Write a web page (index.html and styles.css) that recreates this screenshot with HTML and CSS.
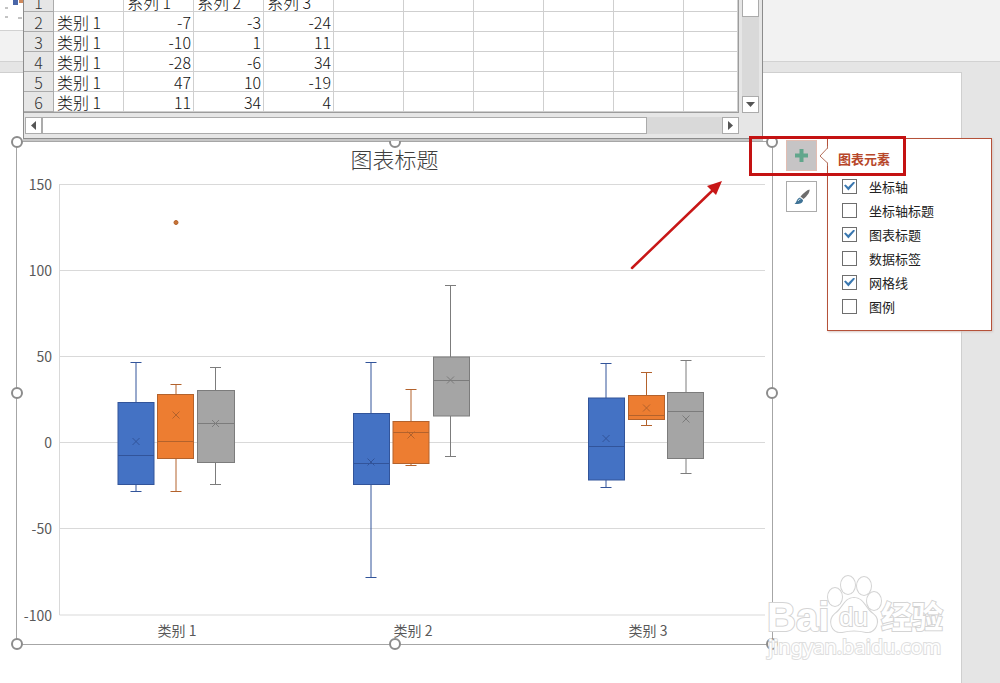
FILE: index.html
```html
<!DOCTYPE html>
<html lang="zh-CN">
<head>
<meta charset="utf-8">
<meta name="viewport" content="width=device-width, initial-scale=1">
<title>图表标题</title>
<link rel="stylesheet" href="styles.css">
</head>
<body>
<header class="ribbon">
  <div class="gallery">
    <svg width="24" height="30" viewBox="0 0 24 30" aria-hidden="true">
      <path d="M13 0h5v5h-5z" fill="#4a66a8"/><path d="M19 0h5v3h-5z" fill="#d08a5c"/>
      <path d="M5 8h3M5 17h3M18 18h4" stroke="#888"/>
    </svg>
  </div>
</header>

<main class="workspace">
  <section class="slide">
    <figure class="chart">
      <figcaption class="chart-title">图表标题</figcaption>
      <svg class="plot" viewBox="17 175 755 469" role="img" aria-label="箱形图">
        <g class="grid">
          <path d="M60 184.500H765M60 270.500H765M60 356.500H765M60 442.500H765M60 528.500H765M59.500 184V615H765"/>
        </g>
        <g class="axis-y">
          <text x="52" y="190">150</text><text x="52" y="276">100</text><text x="52" y="362">50</text>
          <text x="52" y="448">0</text><text x="52" y="534">-50</text><text x="52" y="621">-100</text>
        </g>
        <g class="axis-x">
          <text x="177" y="636">类别 1</text><text x="413" y="636">类别 2</text><text x="648" y="636">类别 3</text>
        </g>
        <g class="blue">
          <path d="M136 362V402M136 485V491M130.500 362.500h11M130.500 491.500h11"/>
          <rect x="118" y="402.500" width="36" height="82"/><path d="M118 455.500h36M132.500 438l7 7m0-7l-7 7"/>
          <path d="M371 362V414M371 485V577M365.500 362.500h11M365.500 577.500h11"/>
          <rect x="353.500" y="413.500" width="36" height="71"/><path d="M353 463.500h36M367.500 458.500l7 7m0-7l-7 7"/>
          <path d="M606 364V398M606 480V488M600.500 363.500h11M600.500 487.500h11"/>
          <rect x="588.500" y="398" width="36" height="82"/><path d="M588 446.500h36M602.500 435l7 7m0-7l-7 7"/>
        </g>
        <g class="orange">
          <circle cx="176" cy="222.500" r="2"/>
          <path d="M176 384V394M176 459V491M170.500 384.500h11M170.500 491.500h11"/>
          <rect x="157.500" y="394.500" width="36" height="64"/><path d="M157 441.500h36M172.500 411.500l7 7m0-7l-7 7"/>
          <path d="M411 389V421M411 464V466M405.500 389.500h11M405.500 465.500h11"/>
          <rect x="393" y="421.500" width="36" height="42"/><path d="M393 432.500h36M407.500 431.500l7 7m0-7l-7 7"/>
          <path d="M646.500 373V395M646.500 419V426M641 372.500h11M641 425.500h11"/>
          <rect x="628.500" y="395.500" width="36" height="24"/><path d="M628 415.500h36M643 404.500l7 7m0-7l-7 7"/>
        </g>
        <g class="gray">
          <path d="M215.500 367V390M215.500 462V484M210 367.500h11M210 484.500h11"/>
          <rect x="197.500" y="390.500" width="37" height="72"/><path d="M197 423.500h37M212 420l7 7m0-7l-7 7"/>
          <path d="M450.500 286V357M450.500 416V457M445 285.500h11M445 456.500h11"/>
          <rect x="433.500" y="357" width="36" height="59"/><path d="M433 380.500h36M447 376.500l7 7m0-7l-7 7"/>
          <path d="M686 360V392M686 459V473M680.500 360.500h11M680.500 473.500h11"/>
          <rect x="667.500" y="392.500" width="36" height="66"/><path d="M667 411.500h36M682.500 415.500l7 7m0-7l-7 7"/>
        </g>
      </svg>
      <span class="handle top left"></span><span class="handle top center"></span><span class="handle top right"></span>
      <span class="handle middle left"></span><span class="handle middle right"></span>
      <span class="handle bottom left"></span><span class="handle bottom center"></span><span class="handle bottom right"></span>
    </figure>

    <div class="tools">
      <button class="tool active" type="button" aria-label="图表元素">
        <svg width="13" height="13" viewBox="0 0 13 13"><path d="M6.500 0V13M0 6.500H13" stroke="#62a68c" stroke-width="4"/></svg>
      </button>
      <button class="tool" type="button" aria-label="图表样式">
        <svg width="18" height="18" viewBox="0 0 18 18">
          <path d="M16.500 1.500C17 4 14.500 7.500 10.500 11L7.500 8.500C10.500 5 14 2 16.500 1.500Z" fill="#6c6c6c"/>
          <path d="M7 9.500L10 12C10 15 7 16.500 1.500 16C4 14.500 3.500 10.500 7 9.500Z" fill="#3f7396"/>
          <path d="M5 13q1-2 2.500-2" stroke="#cfe0ea" fill="none"/>
        </svg>
      </button>
      <form class="panel">
        <svg class="pointer" width="10" height="20" viewBox="0 0 10 20" aria-hidden="true"><path d="M9 0V2L1 10L9 17V20H10V0Z" fill="#fff"/><path d="M8.500 0V2L1 10L8.500 17V20" fill="none" stroke="#b5705c"/></svg>
        <h2 class="panel-title">图表元素</h2>
        <label class="option"><input type="checkbox" checked>坐标轴</label>
        <label class="option"><input type="checkbox">坐标轴标题</label>
        <label class="option"><input type="checkbox" checked>图表标题</label>
        <label class="option"><input type="checkbox">数据标签</label>
        <label class="option"><input type="checkbox" checked>网格线</label>
        <label class="option"><input type="checkbox">图例</label>
      </form>
      <svg class="callout" width="160" height="42" viewBox="748 135 160 42" aria-hidden="true">
        <rect x="750.500" y="137.500" width="154" height="37" fill="none" stroke="#c41212" stroke-width="3"/>
      </svg>
      <svg class="arrow" width="96" height="92" viewBox="628 179 96 92" aria-hidden="true">
        <path d="M632 268L713 190" stroke="#c81717" stroke-width="2.500" stroke-linecap="round"/>
        <path d="M722 181L716 195L707 186Z" fill="#c81717"/>
      </svg>
    </div>

    <svg class="watermark" width="184" height="92" viewBox="764 570 184 92">
      <g class="mark">
        <text class="brand" x="767" y="631">Bai</text>
        <ellipse cx="835" cy="597" rx="7" ry="9"/><ellipse cx="848" cy="585" rx="7" ry="9"/>
        <ellipse cx="864" cy="586" rx="7" ry="9"/><ellipse cx="874" cy="601" rx="7" ry="9"/>
        <path d="M854 598C864 598 865 609 873 614C881 620 876 633 866 632C858 630 850 630 842 632C831 633 828 620 835 614C843 609 844 598 854 598Z"/>
        <text class="du" x="839" y="626">du</text>
        <text class="cn" x="881" y="628">经验</text>
        <text class="site" x="768" y="654">jingyan.baidu.com</text>
      </g>
    </svg>
  </section>
</main>

<section class="sheet" aria-label="数据表">
  <table class="cells">
    <colgroup><col class="num"><col class="data" span="9"><col></colgroup>
    <tbody>
      <tr><th>1</th><td></td><td class="head">系列 1</td><td class="head">系列 2</td><td class="head">系列 3</td><td></td><td></td><td></td><td></td><td></td><td></td></tr>
      <tr><th>2</th><td class="name">类别 1</td><td>-7</td><td>-3</td><td>-24</td><td></td><td></td><td></td><td></td><td></td><td></td></tr>
      <tr><th>3</th><td class="name">类别 1</td><td>-10</td><td>1</td><td>11</td><td></td><td></td><td></td><td></td><td></td><td></td></tr>
      <tr><th>4</th><td class="name">类别 1</td><td>-28</td><td>-6</td><td>34</td><td></td><td></td><td></td><td></td><td></td><td></td></tr>
      <tr><th>5</th><td class="name">类别 1</td><td>47</td><td>10</td><td>-19</td><td></td><td></td><td></td><td></td><td></td><td></td></tr>
      <tr><th>6</th><td class="name">类别 1</td><td>11</td><td>34</td><td>4</td><td></td><td></td><td></td><td></td><td></td><td></td></tr>
    </tbody>
  </table>
  <div class="scroll vertical">
    <span class="thumb"></span>
    <button class="step" type="button" aria-label="向下"><svg width="9" height="5" viewBox="0 0 9 5"><path d="M0 0H9L4.500 5Z"/></svg></button>
  </div>
  <div class="scroll horizontal">
    <button class="step" type="button" aria-label="向左"><svg width="5" height="9" viewBox="0 0 5 9"><path d="M5 0V9L0 4.500Z"/></svg></button>
    <span class="thumb"></span>
    <button class="step" type="button" aria-label="向右"><svg width="5" height="9" viewBox="0 0 5 9"><path d="M0 0V9L5 4.500Z"/></svg></button>
  </div>
</section>
</body>
</html>
```
FILE: styles.css
```css
* { box-sizing: border-box; }

body {
  margin: 0;
  min-height: 100vh;
  display: flex;
  flex-direction: column;
  position: relative;
  overflow: hidden;
  background: #e5e5e5;
  color: #222;
  font-family: "Noto Sans CJK SC", "Liberation Sans", sans-serif;
  font-size: 13px;
}

button { padding: 0; font: inherit; }

.ribbon { height: 62px; background: #f2f2f2; border-bottom: 1px solid #d2d2d2; }
.gallery { width: 60px; height: 31px; background: #fff; border-bottom: 1px solid #d2d2d2; }
.gallery svg { display: block; }

.workspace { flex: 1; display: flex; padding: 10px 38px 0 0; }

.slide {
  flex: 1;
  display: flex;
  align-items: flex-start;
  gap: 13px;
  position: relative;
  padding: 68px 144px 32px 16px;
  background: #fff;
  border: solid #cfcfcf;
  border-width: 1px 1px 0 0;
}

/* chart object */
.chart {
  flex: 1;
  position: relative;
  margin: 0;
  border: 1px solid #a6a6a6;
}
.chart-title {
  height: 33px;
  line-height: 32px;
  text-align: center;
  font-size: 22px;
  font-weight: 300;
  color: #404040;
}
.plot { display: block; width: 100%; height: auto; }
.grid path { fill: none; stroke: #d9d9d9; }
.axis-y text, .axis-x text { font-size: 14px; fill: #595959; }
.axis-y text { text-anchor: end; }
.axis-x text { text-anchor: middle; }
.blue { fill: #4472c4; stroke: #32549a; }
.orange { fill: #ed7d31; stroke: #b3622c; }
.orange circle { fill: #c87436; }
.gray { fill: #a5a5a5; stroke: #7c7c7c; }

.handle {
  position: absolute;
  width: 12px;
  height: 12px;
  border: 2px solid #8c8c8c;
  border-radius: 50%;
  background: #fff;
}
.handle.top { top: -6px; }
.handle.middle { top: calc(50% - 6px); }
.handle.bottom { bottom: -6px; }
.handle.left { left: -6px; }
.handle.center { left: calc(50% - 6px); }
.handle.right { right: -6px; }

/* buttons beside the chart */
.tools {
  position: relative;
  display: flex;
  flex-direction: column;
  gap: 10px;
  width: 31px;
  margin-top: -1px;
}
.tool {
  display: grid;
  place-items: center;
  height: 31px;
  background: #fff;
  border: 1px solid #ababab;
}
.tool.active { background: #c6c4c5; border-color: #e2bdb2; }

.panel {
  position: absolute;
  left: 41px;
  top: -2px;
  width: 165px;
  padding: 8px 0 12px 14px;
  background: #fff;
  border: 1px solid #b5523a;
  box-shadow: 1px 1px 2px #d6c6c2;
}
.pointer { position: absolute; left: -9px; top: 7px; }
.panel-title {
  margin: 0 0 3px -4px;
  font-size: 13px;
  line-height: 24px;
  color: #b7472a;
}
.option { display: flex; align-items: center; gap: 12px; height: 24px; }
.option input {
  appearance: none;
  width: 15px;
  height: 15px;
  margin: 0;
  border: 1px solid #6e6e6e;
  background: #fff;
  display: grid;
  place-items: center;
}
.option input:checked::before {
  content: "";
  width: 11px;
  height: 9px;
  background: #3b78b0;
  clip-path: polygon(0 45%, 15% 33%, 38% 62%, 88% 0, 100% 14%, 40% 100%);
}

.callout { position: absolute; left: -38px; top: -5px; z-index: 2; pointer-events: none; }
.arrow { position: absolute; left: -158px; top: 39px; pointer-events: none; }

.watermark { position: absolute; right: 13px; bottom: 21px; }
.mark { fill: #fff; stroke: #d4d4d4; stroke-width: 2; paint-order: stroke; }
.mark text { font-family: "Liberation Sans", "Noto Sans CJK SC", sans-serif; font-weight: 700; }
.mark .brand { font-size: 40px; }
.mark .du { font-size: 26px; font-weight: 400; }
.mark .cn { font-size: 31px; }
.mark .site { font-family: "Noto Sans", sans-serif; font-size: 20px; font-weight: 400; stroke: #dedede; }

/* floating data window */
.sheet {
  position: absolute;
  z-index: 1;
  left: 23px;
  top: -9px;
  width: 740px;
  display: grid;
  grid-template-columns: 1fr 17px;
  gap: 4px 3px;
  padding: 1px 3px 4px 0;
  background: #e6e6e6;
  border: solid #8c8c8c;
  border-width: 0 1px 1px;
  box-shadow: 0 2px 0 #c6c6c6;
}
.cells {
  width: 100%;
  table-layout: fixed;
  border-collapse: separate;
  border-spacing: 0;
  background: #fff;
  border: solid #9c9c9c;
  border-width: 0 1px 1px 0;
  font-size: 16px;
  line-height: 18px;
}
.cells .num { width: 30px; }
.cells .data { width: 70px; }
.cells th, .cells td {
  height: 20px;
  padding: 1px 2px 0;
  border: solid #cfcfcf;
  border-width: 0 1px 1px 0;
  font-weight: 300;
  text-align: right;
  white-space: nowrap;
  color: #111;
}
.cells th { background: #e6e6e6; border-color: #ababab; text-align: center; color: #333; }
.cells td.name, .cells td.head { text-align: left; padding-left: 3px; }

.scroll { display: flex; background: #d9d9d9; }
.scroll .thumb { background: #fff; border: 1px solid #ababab; }
.scroll .step {
  display: grid;
  place-items: center;
  width: 17px;
  height: 17px;
  background: #fff;
  border: 1px solid #ababab;
}
.scroll .step svg { fill: #555; }
.vertical { flex-direction: column; justify-content: space-between; }
.vertical .thumb { height: 25px; }
.horizontal { margin-left: 1px; }
.horizontal .thumb { flex: 0 0 605px; }
.horizontal .step:last-child { margin-left: auto; }
```
